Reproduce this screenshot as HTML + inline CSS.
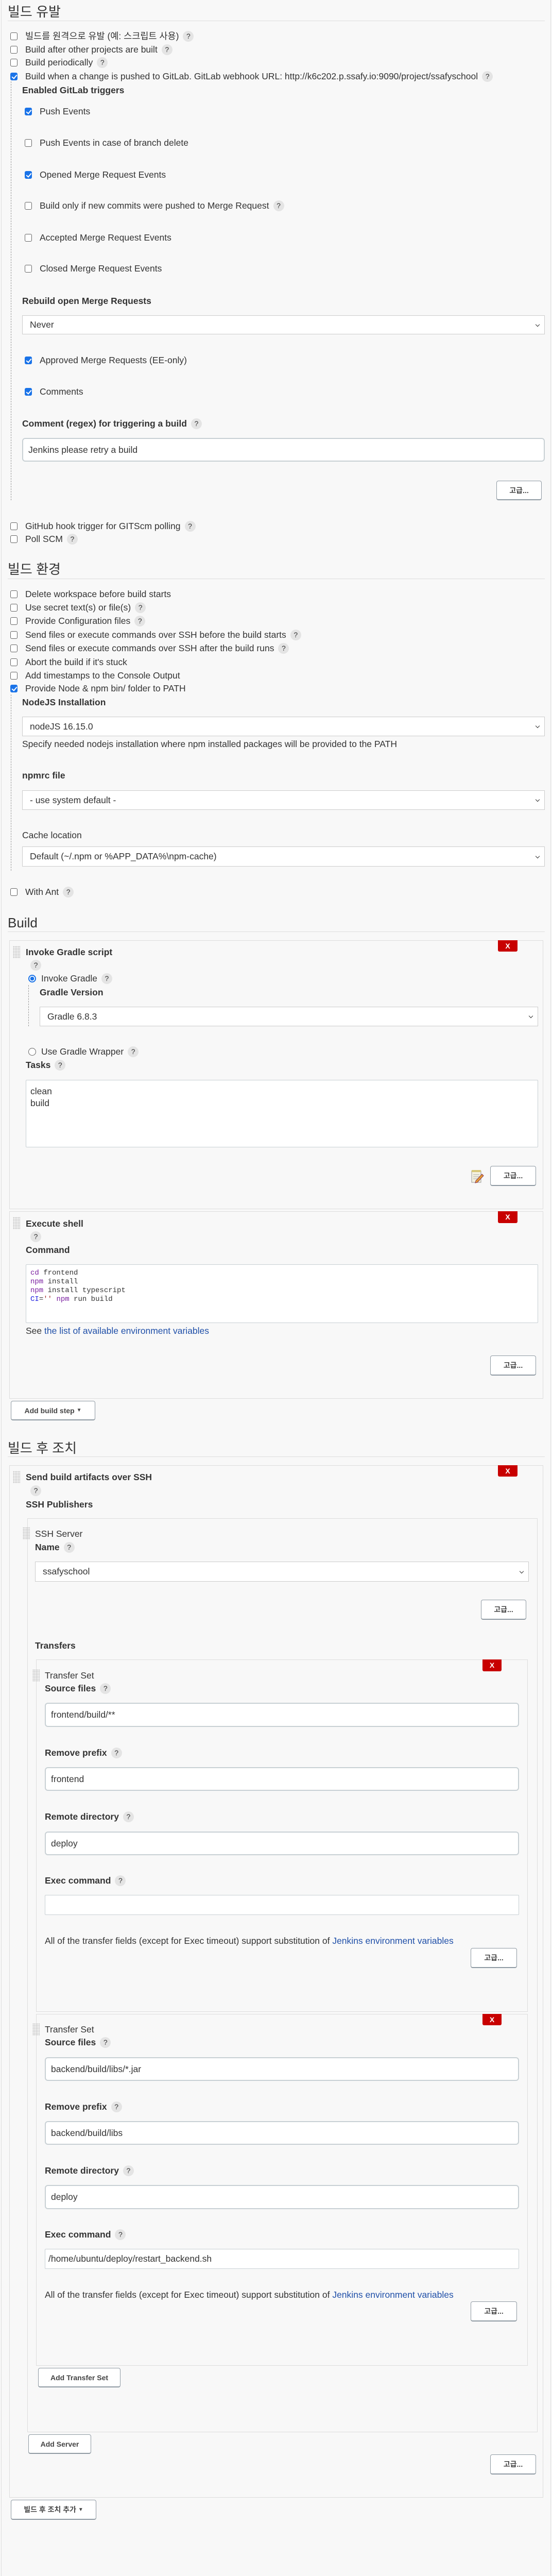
<!DOCTYPE html>
<html><head><meta charset="utf-8">
<style>
*{box-sizing:border-box;margin:0;padding:0}
html,body{width:1072px;height:5061px;background:#f8f8f8;overflow:hidden}
body{position:relative;font-family:"Liberation Sans","Noto Sans CJK KR",sans-serif;font-size:17.5px;color:#333}
.a{position:absolute}
.r{position:absolute;height:20px;line-height:20px;display:flex;align-items:center;white-space:nowrap}
.b{font-weight:bold}
.h{position:absolute;font-size:26px;line-height:32px;color:#333;font-family:"Liberation Sans","Noto Sans CJK KR",sans-serif}
.hr{position:absolute;left:15px;width:1043px;height:1px;background:#ddd}
.cb{position:absolute;width:14px;height:15px;border:1px solid #666;border-radius:3px;background:#fff}
.cb.on{background:#1a73e8;border-color:#1a73e8}
.cb.on:after{content:"";position:absolute;left:4px;top:1px;width:4px;height:8px;border:solid #fff;border-width:0 2px 2px 0;transform:rotate(40deg)}
.q{display:inline-block;width:21px;height:21px;border-radius:50%;background:#e4e4e4;color:#333;font-size:14px;line-height:21px;text-align:center;margin-left:8px;font-weight:normal}
.sel{position:absolute;background:#fff;border:1px solid #ccc;padding-left:14px;display:flex;align-items:center;font-size:17.5px}
.sel:after{content:"";position:absolute;right:10px;top:50%;margin-top:-4px;width:5px;height:5px;border:solid #333;border-width:0 1.5px 1.5px 0;transform:rotate(45deg)}
.inp{position:absolute;background:#fff;border:2px solid #c8d0d4;border-radius:6px;padding-left:10px;display:flex;align-items:center;font-size:17.5px}
.ta{position:absolute;background:#fff;border:1px solid #c8d0d4;border-radius:2px}
.btn{position:absolute;background:#fff;border:1px solid #8f9aa3;border-bottom-width:2px;border-radius:4px;display:flex;align-items:center;justify-content:center;font-size:14px;font-weight:bold;color:#444}
.x{position:absolute;background:#c80000;color:#fff;font-weight:bold;font-size:14px;text-align:center;line-height:22px;border-radius:0 0 3px 3px}
.box{position:absolute;border:1px solid #ddd}
.dash{position:absolute;width:0;border-left:1px dashed #999}
.hd{position:absolute;width:14px;height:24px;background-image:radial-gradient(#bbb 0.8px,transparent 0.9px);background-size:3px 3px}
.rad{position:absolute;width:15px;height:15px;border-radius:50%;border:1px solid #666;background:#fff}
.rad.on{border:2px solid #1a73e8;background:radial-gradient(#1a73e8 3.5px,#fff 4px)}
a{color:#1f4fa8;text-decoration:none}
.mono{font-family:"Liberation Mono",monospace;font-size:14px;line-height:17px}
</style></head><body>
<div class="a" style="left:2px;top:0;width:1px;height:5061px;background:#ddd"></div>
<div class="a" style="left:1069px;top:0;width:1px;height:5061px;background:#ddd"></div>

<div class="h" style="left:15px;top:7px">빌드 유발</div>
<div class="hr" style="top:40px"></div>
<div class="cb" style="left:20px;top:63px"></div><div class="r" style="left:49px;top:60px">빌드를 원격으로 유발 (예: 스크립트 사용)<span class="q">?</span></div>
<div class="cb" style="left:20px;top:89px"></div><div class="r" style="left:49px;top:86px">Build after other projects are built<span class="q">?</span></div>
<div class="cb" style="left:20px;top:114px"></div><div class="r" style="left:49px;top:111px">Build periodically<span class="q">?</span></div>
<div class="cb on" style="left:20px;top:141px"></div><div class="r" style="left:49px;top:138px">Build when a change is pushed to GitLab. GitLab webhook URL: http://k6c202.p.ssafy.io:9090/project/ssafyschool<span class="q">?</span></div>
<div class="dash" style="left:21px;top:158px;height:813px"></div>
<div class="r b" style="left:43px;top:165px">Enabled GitLab triggers</div>
<div class="cb on" style="left:48px;top:209px"></div><div class="r" style="left:77px;top:206px">Push Events</div>
<div class="cb" style="left:48px;top:270px"></div><div class="r" style="left:77px;top:267px">Push Events in case of branch delete</div>
<div class="cb on" style="left:48px;top:332px"></div><div class="r" style="left:77px;top:329px">Opened Merge Request Events</div>
<div class="cb" style="left:48px;top:392px"></div><div class="r" style="left:77px;top:389px">Build only if new commits were pushed to Merge Request<span class="q">?</span></div>
<div class="cb" style="left:48px;top:454px"></div><div class="r" style="left:77px;top:451px">Accepted Merge Request Events</div>
<div class="cb" style="left:48px;top:514px"></div><div class="r" style="left:77px;top:511px">Closed Merge Request Events</div>
<div class="r b" style="left:43px;top:574px">Rebuild open Merge Requests</div>
<div class="sel" style="left:43px;top:612px;width:1015px;height:37px">Never</div>
<div class="cb on" style="left:48px;top:692px"></div><div class="r" style="left:77px;top:689px">Approved Merge Requests (EE-only)</div>
<div class="cb on" style="left:48px;top:753px"></div><div class="r" style="left:77px;top:750px">Comments</div>
<div class="r b" style="left:43px;top:812px">Comment (regex) for triggering a build<span class="q">?</span></div>
<div class="inp" style="left:43px;top:850px;width:1015px;height:46px">Jenkins please retry a build</div>
<div class="btn" style="left:964px;top:933px;width:88px;height:38px">고급...</div>
<div class="cb" style="left:20px;top:1014px"></div><div class="r" style="left:49px;top:1011px">GitHub hook trigger for GITScm polling<span class="q">?</span></div>
<div class="cb" style="left:20px;top:1039px"></div><div class="r" style="left:49px;top:1036px">Poll SCM<span class="q">?</span></div>

<div class="h" style="left:15px;top:1089px">빌드 환경</div>
<div class="hr" style="top:1123px"></div>
<div class="cb" style="left:20px;top:1146px"></div><div class="r" style="left:49px;top:1143px">Delete workspace before build starts</div>
<div class="cb" style="left:20px;top:1172px"></div><div class="r" style="left:49px;top:1169px">Use secret text(s) or file(s)<span class="q">?</span></div>
<div class="cb" style="left:20px;top:1198px"></div><div class="r" style="left:49px;top:1195px">Provide Configuration files<span class="q">?</span></div>
<div class="cb" style="left:20px;top:1225px"></div><div class="r" style="left:49px;top:1222px">Send files or execute commands over SSH before the build starts<span class="q">?</span></div>
<div class="cb" style="left:20px;top:1251px"></div><div class="r" style="left:49px;top:1248px">Send files or execute commands over SSH after the build runs<span class="q">?</span></div>
<div class="cb" style="left:20px;top:1278px"></div><div class="r" style="left:49px;top:1275px">Abort the build if it's stuck</div>
<div class="cb" style="left:20px;top:1304px"></div><div class="r" style="left:49px;top:1301px">Add timestamps to the Console Output</div>
<div class="cb on" style="left:20px;top:1329px"></div><div class="r" style="left:49px;top:1326px">Provide Node &amp; npm bin/ folder to PATH</div>
<div class="dash" style="left:21px;top:1348px;height:342px"></div>
<div class="r b" style="left:43px;top:1353px">NodeJS Installation</div>
<div class="sel" style="left:43px;top:1391px;width:1015px;height:38px">nodeJS 16.15.0</div>
<div class="r" style="left:43px;top:1434px">Specify needed nodejs installation where npm installed packages will be provided to the PATH</div>
<div class="r b" style="left:43px;top:1495px">npmrc file</div>
<div class="sel" style="left:43px;top:1534px;width:1015px;height:38px">- use system default -</div>
<div class="r" style="left:43px;top:1611px">Cache location</div>
<div class="sel" style="left:43px;top:1643px;width:1015px;height:39px">Default (~/.npm or %APP_DATA%\npm-cache)</div>
<div class="cb" style="left:20px;top:1724px"></div><div class="r" style="left:49px;top:1721px">With Ant<span class="q">?</span></div>

<div class="h" style="left:15px;top:1775px">Build</div>
<div class="hr" style="top:1808px"></div>
<div class="box" style="left:18px;top:1825px;width:1037px;height:522px"></div>
<div class="x" style="left:967px;top:1825px;width:38px;height:22px">X</div>
<div class="hd" style="left:25px;top:1836px"></div>
<div class="r b" style="left:50px;top:1838px">Invoke Gradle script</div>
<div class="r" style="left:51px;top:1863px"><span class="q">?</span></div>
<div class="rad on" style="left:55px;top:1892px"></div><div class="r" style="left:80px;top:1889px">Invoke Gradle<span class="q">?</span></div>
<div class="dash" style="left:55px;top:1912px;height:80px"></div>
<div class="r b" style="left:77px;top:1916px">Gradle Version</div>
<div class="sel" style="left:77px;top:1954px;width:968px;height:38px">Gradle 6.8.3</div>
<div class="rad" style="left:55px;top:2034px"></div><div class="r" style="left:80px;top:2031px">Use Gradle Wrapper<span class="q">?</span></div>
<div class="r b" style="left:50px;top:2057px">Tasks<span class="q">?</span></div>
<div class="ta" style="left:50px;top:2096px;width:995px;height:131px;padding:10px 8px;line-height:23px">clean<br>build</div>
<svg class="a" style="left:914px;top:2270px" width="26" height="27" viewBox="0 0 26 27"><rect x="2" y="3" width="18" height="22" fill="#f4f1e0" stroke="#999"/><rect x="2" y="1" width="18" height="4" fill="#d8c878"/><path d="M5 10h12M5 14h12M5 18h8" stroke="#aaa"/><path d="M10 22l12-13 3 3-12 13-4 1z" fill="#e8a030" stroke="#835"/></svg>
<div class="btn" style="left:952px;top:2263px;width:89px;height:39px">고급...</div>

<div class="box" style="left:18px;top:2351px;width:1037px;height:364px"></div>
<div class="x" style="left:967px;top:2351px;width:38px;height:23px">X</div>
<div class="hd" style="left:25px;top:2362px"></div>
<div class="r b" style="left:50px;top:2365px">Execute shell</div>
<div class="r" style="left:51px;top:2390px"><span class="q">?</span></div>
<div class="r b" style="left:50px;top:2416px">Command</div>
<div class="ta mono" style="left:50px;top:2454px;width:995px;height:114px;padding:8px 8px"><span style="color:#7a1fa0">cd</span> frontend<br><span style="color:#7a1fa0">npm</span> install<br><span style="color:#7a1fa0">npm</span> install typescript<br><span style="color:#2020e0">CI</span>=<span style="color:#a33">''</span> <span style="color:#7a1fa0">npm</span> run build</div>
<div class="r" style="left:50px;top:2573px">See&nbsp;<a>the list of available environment variables</a></div>
<div class="btn" style="left:952px;top:2631px;width:89px;height:39px">고급...</div>
<div class="btn" style="left:21px;top:2719px;width:164px;height:38px">Add build step&nbsp;<span style="font-size:10px">▼</span></div>

<div class="h" style="left:15px;top:2795px">빌드 후 조치</div>
<div class="hr" style="top:2827px"></div>
<div class="box" style="left:18px;top:2844px;width:1037px;height:2004px"></div>
<div class="x" style="left:967px;top:2844px;width:38px;height:22px">X</div>
<div class="hd" style="left:25px;top:2855px"></div>
<div class="r b" style="left:50px;top:2857px">Send build artifacts over SSH</div>
<div class="r" style="left:51px;top:2883px"><span class="q">?</span></div>
<div class="r b" style="left:50px;top:2910px">SSH Publishers</div>
<div class="box" style="left:53px;top:2947px;width:991px;height:1774px"></div>
<div class="hd" style="left:44px;top:2964px"></div>
<div class="r" style="left:68px;top:2967px">SSH Server</div>
<div class="r b" style="left:68px;top:2993px">Name<span class="q">?</span></div>
<div class="sel" style="left:68px;top:3031px;width:959px;height:39px">ssafyschool</div>
<div class="btn" style="left:934px;top:3105px;width:88px;height:39px">고급...</div>
<div class="r b" style="left:68px;top:3184px">Transfers</div>

<div class="box" style="left:70px;top:3221px;width:955px;height:684px"></div>
<div class="x" style="left:937px;top:3221px;width:37px;height:23px">X</div>
<div class="hd" style="left:63px;top:3240px"></div>
<div class="r" style="left:87px;top:3242px">Transfer Set</div>
<div class="r b" style="left:87px;top:3267px">Source files<span class="q">?</span></div>
<div class="inp" style="left:87px;top:3305px;width:921px;height:47px">frontend/build/**</div>
<div class="r b" style="left:87px;top:3392px">Remove prefix<span class="q">?</span></div>
<div class="inp" style="left:87px;top:3430px;width:921px;height:46px">frontend</div>
<div class="r b" style="left:87px;top:3516px">Remote directory<span class="q">?</span></div>
<div class="inp" style="left:87px;top:3555px;width:921px;height:46px">deploy</div>
<div class="r b" style="left:87px;top:3640px">Exec command<span class="q">?</span></div>
<div class="ta" style="left:87px;top:3678px;width:921px;height:39px"></div>
<div class="r" style="left:87px;top:3757px">All of the transfer fields (except for Exec timeout) support substitution of&nbsp;<a>Jenkins environment variables</a></div>
<div class="btn" style="left:914px;top:3781px;width:90px;height:39px">고급...</div>

<div class="box" style="left:70px;top:3909px;width:955px;height:683px"></div>
<div class="x" style="left:937px;top:3909px;width:37px;height:22px">X</div>
<div class="hd" style="left:63px;top:3927px"></div>
<div class="r" style="left:87px;top:3929px">Transfer Set</div>
<div class="r b" style="left:87px;top:3954px">Source files<span class="q">?</span></div>
<div class="inp" style="left:87px;top:3993px;width:921px;height:46px">backend/build/libs/*.jar</div>
<div class="r b" style="left:87px;top:4079px">Remove prefix<span class="q">?</span></div>
<div class="inp" style="left:87px;top:4117px;width:921px;height:46px">backend/build/libs</div>
<div class="r b" style="left:87px;top:4203px">Remote directory<span class="q">?</span></div>
<div class="inp" style="left:87px;top:4241px;width:921px;height:47px">deploy</div>
<div class="r b" style="left:87px;top:4327px">Exec command<span class="q">?</span></div>
<div class="ta" style="left:87px;top:4365px;width:921px;height:39px;padding:8px 6px;line-height:20px">/home/ubuntu/deploy/restart_backend.sh</div>
<div class="r" style="left:87px;top:4444px">All of the transfer fields (except for Exec timeout) support substitution of&nbsp;<a>Jenkins environment variables</a></div>
<div class="btn" style="left:914px;top:4467px;width:90px;height:39px">고급...</div>

<div class="btn" style="left:74px;top:4596px;width:160px;height:38px">Add Transfer Set</div>
<div class="btn" style="left:55px;top:4725px;width:122px;height:38px">Add Server</div>
<div class="btn" style="left:952px;top:4764px;width:89px;height:39px">고급...</div>
<div class="btn" style="left:21px;top:4852px;width:166px;height:39px">빌드 후 조치 추가&nbsp;<span style="font-size:10px">▼</span></div>
</body></html>
